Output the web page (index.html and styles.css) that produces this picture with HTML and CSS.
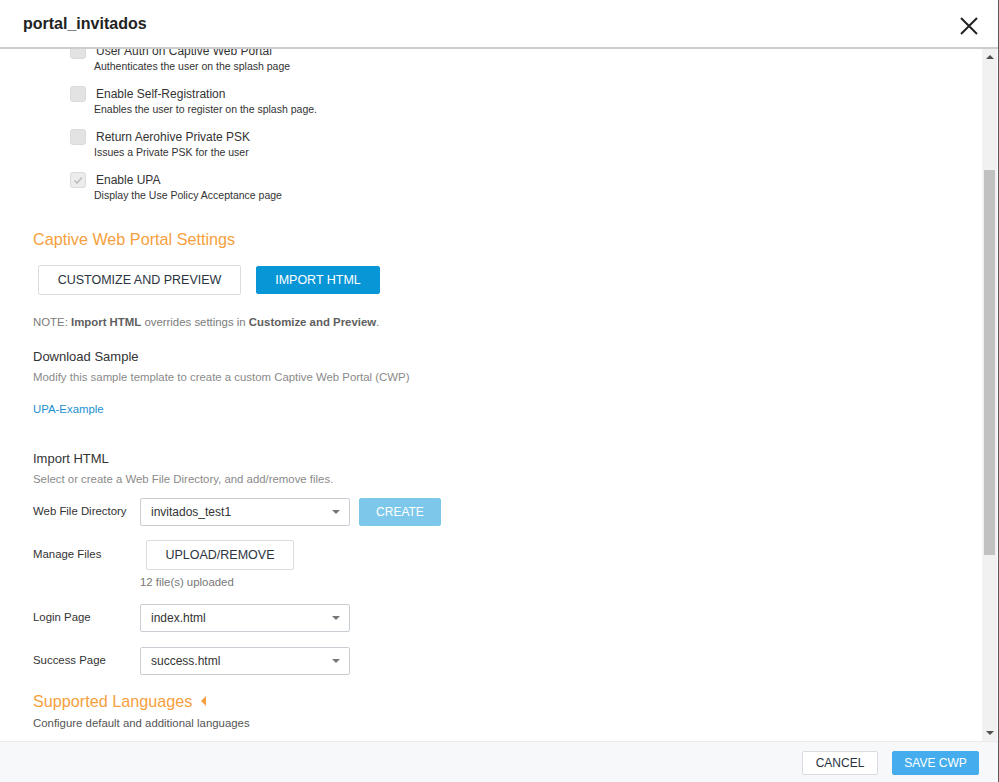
FILE: index.html
```html
<!DOCTYPE html>
<html>
<head>
<meta charset="utf-8">
<link rel="stylesheet" href="styles.css">
</head>
<body>
<div class="dialog">
  <header class="head">
    <h1 class="title">portal_invitados</h1>
    <svg class="close" width="18" height="18" viewBox="0 0 18 18"><path d="M1 1 L17 17 M17 1 L1 17" stroke="#222" stroke-width="2" fill="none"/></svg>
  </header>
  <div class="main">
    <div class="viewport">
      <div class="content">
        <div class="checks">
          <div class="check">
            <span class="box"></span>
            <div class="check-text">
              <div class="check-label">User Auth on Captive Web Portal</div>
              <div class="check-desc">Authenticates the user on the splash page</div>
            </div>
          </div>
          <div class="check">
            <span class="box"></span>
            <div class="check-text">
              <div class="check-label">Enable Self-Registration</div>
              <div class="check-desc">Enables the user to register on the splash page.</div>
            </div>
          </div>
          <div class="check">
            <span class="box"></span>
            <div class="check-text">
              <div class="check-label">Return Aerohive Private PSK</div>
              <div class="check-desc">Issues a Private PSK for the user</div>
            </div>
          </div>
          <div class="check">
            <span class="box box-checked"><svg width="12" height="12" viewBox="0 0 12 12"><path d="M2.5 6.5 L5 9 L10 3.5" stroke="#bdbdbd" stroke-width="1.6" fill="none"/></svg></span>
            <div class="check-text">
              <div class="check-label">Enable UPA</div>
              <div class="check-desc">Display the Use Policy Acceptance page</div>
            </div>
          </div>
        </div>

        <h2 class="section-title">Captive Web Portal Settings</h2>
        <div class="btn-row">
          <button class="btn btn-outline btn-big">CUSTOMIZE AND PREVIEW</button>
          <button class="btn btn-primary btn-import">IMPORT HTML</button>
        </div>
        <p class="note">NOTE: <b>Import HTML</b> overrides settings in <b>Customize and Preview</b>.</p>

        <h3 class="sub-title">Download Sample</h3>
        <p class="sub-desc">Modify this sample template to create a custom Captive Web Portal (CWP)</p>
        <a class="link">UPA-Example</a>

        <h3 class="sub-title sub-import">Import HTML</h3>
        <p class="sub-desc">Select or create a Web File Directory, and add/remove files.</p>

        <div class="form-row row-dir">
          <label class="form-label">Web File Directory</label>
          <div class="select"><span>invitados_test1</span><span class="caret"></span></div>
          <button class="btn btn-create">CREATE</button>
        </div>
        <div class="form-row row-files">
          <label class="form-label">Manage Files</label>
          <button class="btn btn-outline btn-upload">UPLOAD/REMOVE</button>
        </div>
        <div class="files-count">12 file(s) uploaded</div>
        <div class="form-row row-login">
          <label class="form-label">Login Page</label>
          <div class="select"><span>index.html</span><span class="caret"></span></div>
        </div>
        <div class="form-row row-success">
          <label class="form-label">Success Page</label>
          <div class="select"><span>success.html</span><span class="caret"></span></div>
        </div>

        <h2 class="section-title lang-title">Supported Languages <span class="tri"></span></h2>
        <p class="lang-desc">Configure default and additional languages</p>
      </div>
    </div>
    <div class="scrollbar">
      <span class="arrow arrow-up"></span>
      <div class="track"><div class="thumb"></div></div>
      <span class="arrow arrow-down"></span>
    </div>
  </div>
  <footer class="foot">
    <button class="btn btn-outline btn-cancel">CANCEL</button>
    <button class="btn btn-save">SAVE CWP</button>
  </footer>
</div>
</body>
</html>
```

FILE: styles.css
```css
* { box-sizing: border-box; }
html, body { margin: 0; padding: 0; }
body {
  font-family: "Liberation Sans", Arial, sans-serif;
  color: #333;
  background: #fff;
  width: 999px;
  height: 782px;
  overflow: hidden;
}
.dialog {
  width: 999px;
  height: 782px;
  display: flex;
  flex-direction: column;
  border-right: 1px solid #5a5a5a;
  background: #fff;
}
.head {
  height: 49px;
  flex: none;
  display: flex;
  align-items: center;
  justify-content: space-between;
  padding: 0 20px 0 23px;
  border-bottom: 2px solid #cdcdcd;
}
.title {
  margin: 0;
  font-size: 16px;
  font-weight: bold;
  color: #222;
  padding-top: 1px;
}
.close { margin-top: 4px; }
.main {
  flex: 1;
  display: flex;
  min-height: 0;
}
.viewport {
  flex: 1;
  overflow: hidden;
}
.content {
  margin-top: -6px;
  padding-left: 33px;
}
.checks {
  padding-left: 37px;
  display: flex;
  flex-direction: column;
  gap: 13px;
}
.check {
  display: flex;
  gap: 10px;
}
.box {
  width: 16px;
  height: 16px;
  border-radius: 3px;
  background: #e3e3e3;
  border: 1px solid #dadada;
  flex: none;
  display: flex;
  align-items: center;
  justify-content: center;
}
.box-checked { background: #ececec; }
.check-label {
  font-size: 12px;
  line-height: 16px;
  color: #333;
}
.check-desc {
  font-size: 10.5px;
  line-height: 14px;
  color: #333;
  margin-left: -2px;
}
.section-title {
  margin: 27px 0 0;
  font-size: 16.2px;
  line-height: 20px;
  font-weight: normal;
  color: #f6a03d;
}
.btn {
  font-family: "Liberation Sans", Arial, sans-serif;
  border-radius: 2px;
  cursor: pointer;
  padding: 0;
}
.btn-row {
  margin-top: 16px;
  padding-left: 5px;
  display: flex;
  align-items: center;
  gap: 15px;
}
.btn-outline {
  background: #fff;
  border: 1px solid #d9dde2;
  color: #2b3440;
}
.btn-big {
  width: 203px;
  height: 30px;
  font-size: 12.5px;
}
.btn-primary {
  background: #0996d6;
  border: 1px solid #0996d6;
  color: #fff;
}
.btn-import {
  width: 124px;
  height: 28px;
  font-size: 12.5px;
}
.note {
  margin: 20px 0 0;
  font-size: 11.4px;
  line-height: 14px;
  color: #7b7b7b;
}
.note b { color: #5e5e5e; }
.sub-title {
  margin: 20px 0 0;
  font-size: 13px;
  line-height: 16px;
  font-weight: normal;
  color: #333;
}
.sub-desc {
  margin: 5px 0 0;
  font-size: 11.4px;
  line-height: 14px;
  color: #8a8a8a;
}
.link {
  display: block;
  margin-top: 18px;
  font-size: 11.4px;
  line-height: 14px;
  color: #1b8fd0;
}
.sub-import { margin-top: 35px; }
.form-row {
  display: flex;
  align-items: center;
}
.form-label {
  width: 107px;
  flex: none;
  font-size: 11.4px;
  color: #333;
  margin-top: -2px;
}
.row-dir { margin-top: 12px; }
.row-files { margin-top: 14px; }
.row-login { margin-top: 15px; }
.row-success { margin-top: 15px; }
.select {
  width: 210px;
  height: 28px;
  border: 1px solid #c9ced5;
  border-radius: 2px;
  display: flex;
  align-items: center;
  justify-content: space-between;
  padding: 0 9px 0 10px;
  font-size: 12px;
  color: #333;
}
.caret {
  width: 0;
  height: 0;
  border-left: 4px solid transparent;
  border-right: 4px solid transparent;
  border-top: 4px solid #777;
}
.btn-create {
  margin-left: 9px;
  width: 82px;
  height: 28px;
  background: #7dc8ea;
  border: 1px solid #7dc8ea;
  color: #fff;
  font-size: 12px;
}
.btn-upload {
  margin-left: 6px;
  width: 148px;
  height: 30px;
  font-size: 12.5px;
}
.files-count {
  margin: 5px 0 0 107px;
  font-size: 11.4px;
  line-height: 14px;
  color: #777;
}
.lang-title {
  margin-top: 16px;
  display: flex;
  align-items: center;
  gap: 9px;
}
.tri {
  width: 0;
  height: 0;
  border-top: 5px solid transparent;
  border-bottom: 5px solid transparent;
  border-right: 5px solid #f6a03d;
}
.lang-desc {
  margin: 5px 0 0;
  font-size: 11.4px;
  line-height: 14px;
  color: #555;
}
.scrollbar {
  width: 15px;
  flex: none;
  background: #f1f1f1;
  display: flex;
  flex-direction: column;
  align-items: center;
  margin-right: 1px;
}
.arrow {
  width: 0;
  height: 0;
  flex: none;
  margin: 6px 0;
  border-left: 4px solid transparent;
  border-right: 4px solid transparent;
}
.arrow-up { border-bottom: 4px solid #505050; }
.arrow-down { border-top: 4px solid #505050; }
.track {
  flex: 1;
  width: 100%;
  padding: 105px 2px 170px;
  display: flex;
}
.thumb {
  flex: 1;
  background: #c1c1c1;
}
.foot {
  height: 41px;
  flex: none;
  background: #f7f8fa;
  border-top: 1px solid #e9ebee;
  display: flex;
  align-items: center;
  justify-content: flex-end;
  gap: 14px;
  padding: 2px 19px 0 0;
}
.btn-cancel {
  width: 76px;
  height: 24px;
  font-size: 12px;
}
.btn-save {
  width: 87px;
  height: 24px;
  background: #45adee;
  border: 1px solid #45adee;
  color: #fff;
  font-size: 12px;
}
```
